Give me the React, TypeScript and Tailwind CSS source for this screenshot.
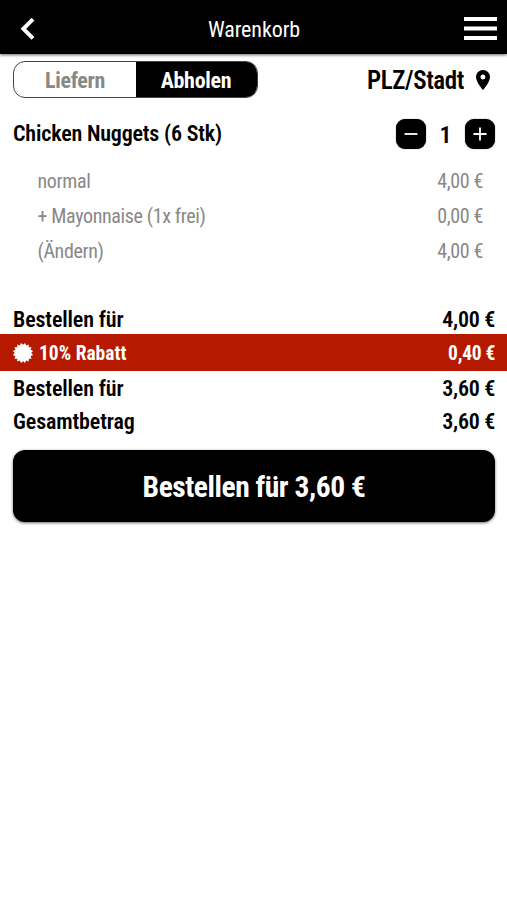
import type { ReactNode } from 'react';

const extras = [
  { label: 'normal', price: '4,00 €' },
  { label: '+ Mayonnaise (1x frei)', price: '0,00 €' },
  { label: '(Ändern)', price: '4,00 €' },
];

// Sixteen-toothed seal outline in a 20x20 box.
const sealPoints = Array.from({ length: 32 }, (_, i) => {
  const r = i % 2 === 0 ? 10.3 : 8.2;
  const a = ((i + 1) * Math.PI) / 16;
  return `${(10 + r * Math.cos(a)).toFixed(2)},${(10 + r * Math.sin(a)).toFixed(2)}`;
}).join(' ');

function SquareButton({ label, children }: { label: string; children: ReactNode }) {
  return (
    <button aria-label={label} className="flex size-[30px] items-center justify-center rounded-[9px] bg-black shadow-[0_0_1px_rgba(0,0,0,0.8)]">
      <svg width="14" height="14" viewBox="0 0 14 14" stroke="white" strokeWidth="1.8" fill="none">
        {children}
      </svg>
    </button>
  );
}

function TotalRow({ label, price }: { label: string; price: string }) {
  return (
    <div className="flex h-[33px] items-center justify-between pr-[12px] pl-[13px] text-[22px] font-semibold">
      <span className="tracking-[-0.13px]">{label}</span>
      <span className="tracking-[-0.3px]">{price}</span>
    </div>
  );
}

export default function App() {
  return (
    <div className="min-h-[900px] w-[507px] bg-white font-['Roboto_Condensed','Roboto',sans-serif] leading-none whitespace-nowrap text-black">
      <header className="grid h-[54px] grid-cols-[100px_1fr_100px] items-center bg-black pt-[3px] text-white shadow-[0_1px_3px_rgba(0,0,0,0.6)]">
        <svg className="ml-[20px]" width="16" height="22" viewBox="0 0 16 22" fill="none" stroke="white" strokeWidth="4">
          <path d="M13 1.2 3.4 10.8 13 20.4" />
        </svg>
        <h1 className="pt-[2px] pl-[1px] text-center text-[22px] font-normal tracking-[-0.1px]">Warenkorb</h1>
        <svg className="mr-[10px] justify-self-end" width="33" height="23" viewBox="0 0 33 23" fill="white">
          <path d="M0 0h33v4H0zM0 9.5h33v4H0zM0 19h33v4H0z" />
        </svg>
      </header>

      <div className="flex h-[50px] items-center justify-between pr-[17px] pl-[13px]">
        <div className="flex h-[37px] w-[245px] overflow-hidden rounded-[12px] border border-[#444] text-[22px] font-bold tracking-[-0.3px]">
          <button className="w-[122px] pt-[3px] text-[#888]">Liefern</button>
          <button className="flex-1 bg-black pt-[3px] pr-[1px] text-white">Abholen</button>
        </div>
        <div className="flex items-center pt-[2px] text-[25px] font-semibold">
          <span className="tracking-[-0.4px]">PLZ/Stadt</span>
          <svg className="mb-px ml-[12px]" width="14" height="20" viewBox="5 2 14 20" fill="black">
            <path d="M12 2C8.13 2 5 5.13 5 9c0 5.25 7 13 7 13s7-7.75 7-13c0-3.87-3.13-7-7-7zm0 9.5a2.5 2.5 0 1 1 0-5 2.5 2.5 0 0 1 0 5z" />
          </svg>
        </div>
      </div>

      <section>
        <div className="flex h-[59px] items-center justify-between pr-[12px] pl-[13px] font-semibold">
          <h2 className="text-[22px] tracking-[-0.18px]">Chicken Nuggets (6 Stk)</h2>
          <div className="flex items-center pt-px">
            <SquareButton label="Weniger"><path d="M0.5 7h13" /></SquareButton>
            <span className="w-[39px] pt-[2px] text-center text-[24px]">1</span>
            <SquareButton label="Mehr"><path d="M0.5 7h13M7 .5v13" /></SquareButton>
          </div>
        </div>
        <div className="pr-[24px] pl-[37.5px] text-[20px] tracking-[-0.36px] text-[#888]">
          {extras.map((e) => (
            <div key={e.label} className="flex h-[35px] items-center justify-between">
              <span>{e.label}</span>
              <span>{e.price}</span>
            </div>
          ))}
        </div>
      </section>

      <section className="pt-[35px]">
        <TotalRow label="Bestellen für" price="4,00 €" />
        <div className="-mt-[2px] flex h-[37px] items-center bg-[#b51a00] pr-[12px] pl-[13px] text-[19.5px] font-bold text-white">
          <svg className="overflow-visible" width="20" height="20" viewBox="0 0 20 20" fill="white">
            <polygon points={sealPoints} />
          </svg>
          <span className="ml-[6px] flex-1 pt-[2px]">10% Rabatt</span>
          <span className="pt-[2px] tracking-[-0.3px]">0,40 €</span>
        </div>
        <div className="pt-[1px]">
          <TotalRow label="Bestellen für" price="3,60 €" />
          <TotalRow label="Gesamtbetrag" price="3,60 €" />
        </div>
      </section>

      <div className="pr-[12px] pl-[13px] pt-[12px]">
        <button className="h-[72px] w-full rounded-[12px] bg-black pt-[3px] text-[29.5px] font-bold tracking-[-0.45px] text-white shadow-[0_1px_3px_rgba(0,0,0,0.6)]">
          Bestellen für 3,60 €
        </button>
      </div>
    </div>
  );
}
